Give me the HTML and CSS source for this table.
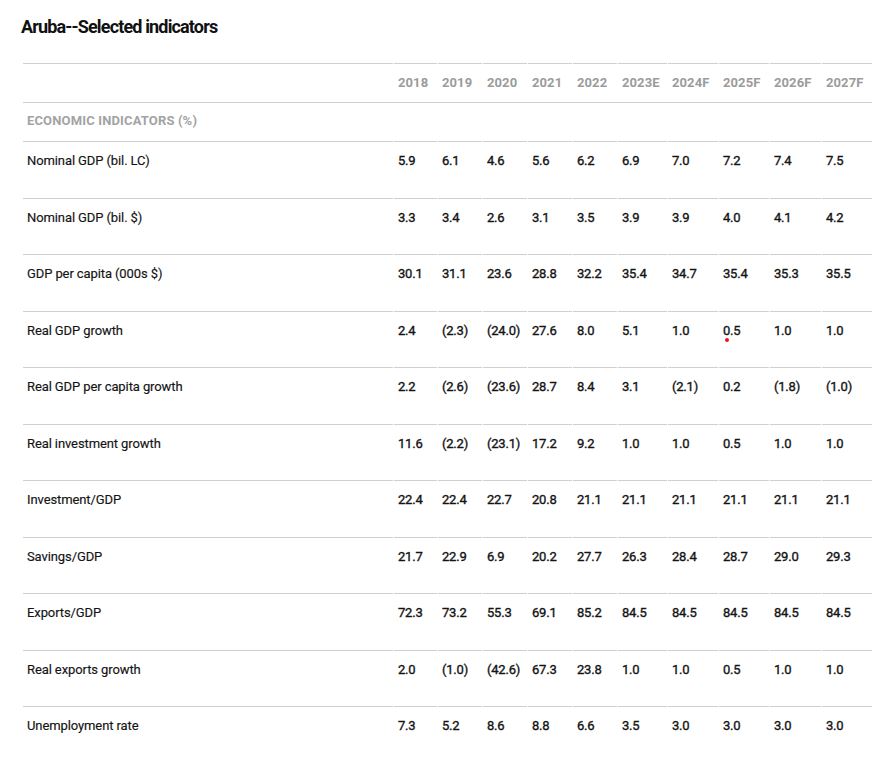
FILE: index.html
```html
<!DOCTYPE html>
<html>
<head>
<meta charset="utf-8">
<link rel="stylesheet" href="styles.css">
</head>
<body>
<div class="page">
  <h1 class="title">Aruba--Selected indicators</h1>
  <table class="ind">
    <colgroup>
      <col class="c-label"><col class="c-a"><col class="c-b"><col class="c-b"><col class="c-b"><col class="c-b"><col class="c-c"><col class="c-d"><col class="c-d"><col class="c-e"><col class="c-d">
    </colgroup>
    <thead>
      <tr class="head">
        <th></th><th>2018</th><th>2019</th><th>2020</th><th>2021</th><th>2022</th><th>2023E</th><th>2024F</th><th>2025F</th><th>2026F</th><th>2027F</th>
      </tr>
    </thead>
    <tbody>
      <tr class="section"><td colspan="11">ECONOMIC INDICATORS (%)</td></tr>
      <tr><td>Nominal GDP (bil. LC)</td><td>5.9</td><td>6.1</td><td>4.6</td><td>5.6</td><td>6.2</td><td>6.9</td><td>7.0</td><td>7.2</td><td>7.4</td><td>7.5</td></tr>
      <tr><td>Nominal GDP (bil. $)</td><td>3.3</td><td>3.4</td><td>2.6</td><td>3.1</td><td>3.5</td><td>3.9</td><td>3.9</td><td>4.0</td><td>4.1</td><td>4.2</td></tr>
      <tr><td>GDP per capita (000s $)</td><td>30.1</td><td>31.1</td><td>23.6</td><td>28.8</td><td>32.2</td><td>35.4</td><td>34.7</td><td>35.4</td><td>35.3</td><td>35.5</td></tr>
      <tr><td>Real GDP growth</td><td>2.4</td><td>(2.3)</td><td>(24.0)</td><td>27.6</td><td>8.0</td><td>5.1</td><td>1.0</td><td class="mark">0.5<span class="dot"></span></td><td>1.0</td><td>1.0</td></tr>
      <tr><td>Real GDP per capita growth</td><td>2.2</td><td>(2.6)</td><td>(23.6)</td><td>28.7</td><td>8.4</td><td>3.1</td><td>(2.1)</td><td>0.2</td><td>(1.8)</td><td>(1.0)</td></tr>
      <tr><td>Real investment growth</td><td>11.6</td><td>(2.2)</td><td>(23.1)</td><td>17.2</td><td>9.2</td><td>1.0</td><td>1.0</td><td>0.5</td><td>1.0</td><td>1.0</td></tr>
      <tr><td>Investment/GDP</td><td>22.4</td><td>22.4</td><td>22.7</td><td>20.8</td><td>21.1</td><td>21.1</td><td>21.1</td><td>21.1</td><td>21.1</td><td>21.1</td></tr>
      <tr><td>Savings/GDP</td><td>21.7</td><td>22.9</td><td>6.9</td><td>20.2</td><td>27.7</td><td>26.3</td><td>28.4</td><td>28.7</td><td>29.0</td><td>29.3</td></tr>
      <tr><td>Exports/GDP</td><td>72.3</td><td>73.2</td><td>55.3</td><td>69.1</td><td>85.2</td><td>84.5</td><td>84.5</td><td>84.5</td><td>84.5</td><td>84.5</td></tr>
      <tr><td>Real exports growth</td><td>2.0</td><td>(1.0)</td><td>(42.6)</td><td>67.3</td><td>23.8</td><td>1.0</td><td>1.0</td><td>0.5</td><td>1.0</td><td>1.0</td></tr>
      <tr><td>Unemployment rate</td><td>7.3</td><td>5.2</td><td>8.6</td><td>8.8</td><td>6.6</td><td>3.5</td><td>3.0</td><td>3.0</td><td>3.0</td><td>3.0</td></tr>
    </tbody>
  </table>
</div>
</body>
</html>
```
FILE: styles.css
```css
* { box-sizing: border-box; }
html, body { margin: 0; padding: 0; background: #fff; }
body {
  font-family: Roboto, "Liberation Sans", Arial, sans-serif;
  color: #141414;
}
.page {
  padding: 15px 0 0 21px;
  width: 890px;
}
.title {
  margin: 0 0 25px 0;
  font-size: 18px;
  line-height: 23px;
  font-weight: 700;
  letter-spacing: -0.85px;
  color: #111;
}
.ind {
  border-collapse: separate;
  border-spacing: 1px 0;
  table-layout: fixed;
  width: 851px;
  margin-left: 1px;
  font-size: 13px;
}
.c-label { width: 370px; }
.c-a { width: 43px; }
.c-b { width: 44px; }
.c-c { width: 49px; }
.c-d { width: 50px; }
.c-e { width: 51px; }
.ind th, .ind td {
  border-top: 1px solid #cfcfcf;
  padding: 0 0 0 4px;
  text-align: left;
  white-space: nowrap;
}
.head th {
  height: 39px;
  vertical-align: middle;
  color: #9b9b9b;
  font-weight: 700;
  letter-spacing: 0.1px;
  padding-bottom: 1px;
}
.section td {
  height: 39px;
  vertical-align: middle;
  color: #a3a3a3;
  font-weight: 700;
  letter-spacing: 0.15px;
  padding-bottom: 3px;
}
.ind tbody tr:not(.section) td {
  height: 56.5px;
  vertical-align: top;
  padding-top: 11px;
  line-height: 16px;
  font-weight: 400;
  letter-spacing: -0.2px;
  -webkit-text-stroke: 0.35px #141414;
}
.ind tbody tr:not(.section) td:first-child {
  font-weight: 400;
  letter-spacing: -0.1px;
  -webkit-text-stroke: 0.15px #141414;
}
.mark { position: relative; }
.dot {
  position: absolute;
  left: 6px;
  top: 26px;
  width: 4px;
  height: 4px;
  border-radius: 50%;
  background: #e8141c;
}
```
